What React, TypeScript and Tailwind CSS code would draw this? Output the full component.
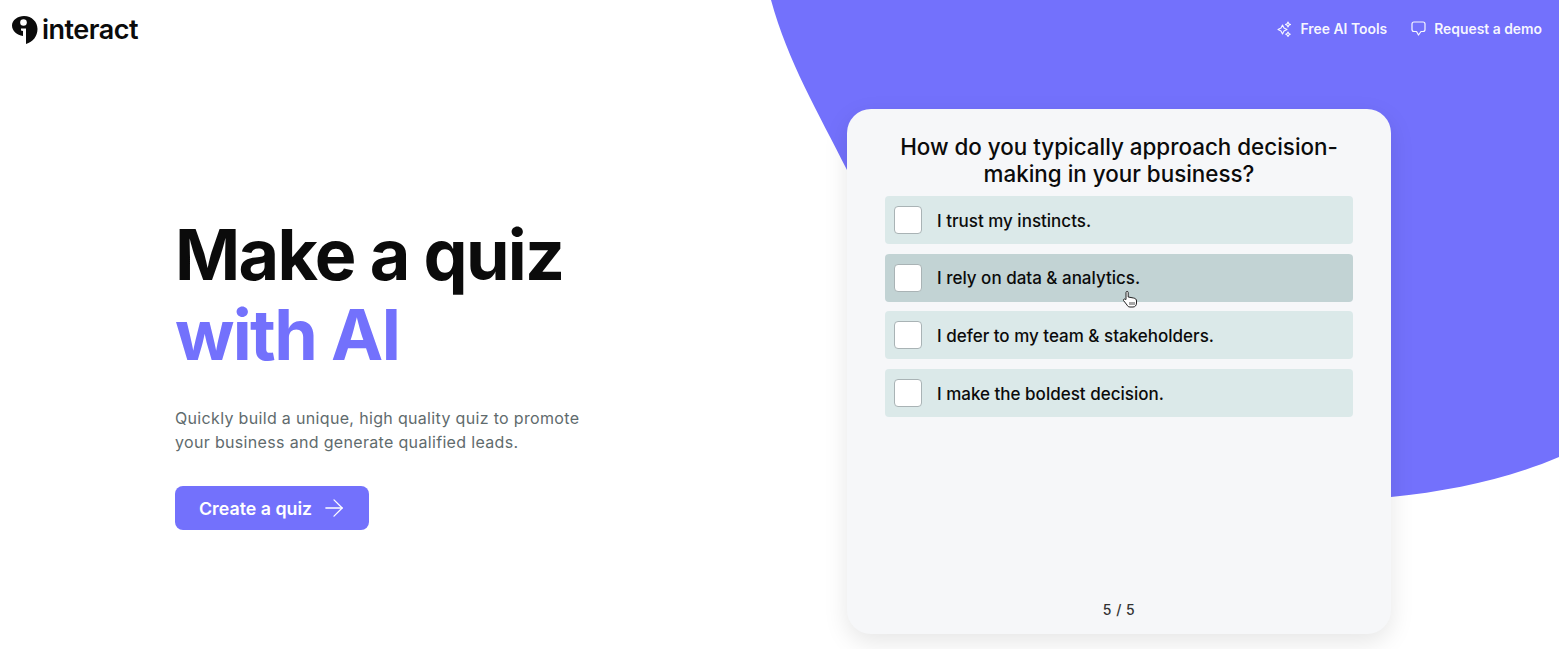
import { ArrowRight } from "lucide-react";

const options = [
  "I trust my instincts.",
  "I rely on data & analytics.",
  "I defer to my team & stakeholders.",
  "I make the boldest decision.",
];

const Logo = () => (
  <div className="flex items-center gap-[3px]">
    <svg width="27" height="28" viewBox="0 0 27 28" className="mt-px">
      <path
        d="M12 0C20 0 25.5 6 25.5 13C25.5 20 21 26 14 28L14 12.5L9 12.5L9 14.5L11 15L11 20C5 19 0 15 0 9.5C0 4 6 0 12 0Z"
        fill="#0b0b0b"
      />
      <circle cx="11.5" cy="6.5" r="3.3" fill="#fff" />
    </svg>
    <span className="text-[27px] leading-none font-semibold tracking-[-0.5px] text-[#0b0b0b]">interact</span>
  </div>
);

const SparkIcon = () => (
  <svg width="15" height="16" viewBox="0 0 15 16" fill="none" stroke="currentColor" strokeWidth="1.1" strokeLinejoin="round">
    <path d="M5.5 4L7 7L10 8.5L7 10L5.5 13L4 10L1 8.5L4 7Z" />
    <path d="M11 1L11.8 2.7L13.5 3.5L11.8 4.3L11 6L10.2 4.3L8.5 3.5L10.2 2.7Z" />
    <path d="M11 11L11.8 12.4L13.2 13.2L11.8 14L11 15.4L10.2 14L8.8 13.2L10.2 12.4Z" />
  </svg>
);

const ChatIcon = () => (
  <svg width="15" height="15" viewBox="0 0 15 15" fill="none" stroke="currentColor" strokeWidth="1.2" strokeLinejoin="round">
    <path d="M3 1H12C13.3 1 14 1.8 14 3V8.5C14 9.8 13.3 10.5 12 10.5H10L7.5 14L5.5 10.5H3C1.7 10.5 1 9.8 1 8.5V3C1 1.8 1.7 1 3 1Z" />
  </svg>
);

const App = () => {
  return (
    <div className="relative h-[649px] w-full overflow-hidden bg-white font-['Inter',sans-serif]">
      <svg className="absolute inset-0" width="1559" height="649" viewBox="0 0 1559 649">
        <path
          d="M771 0C788 62 818 112 847 170C930 340 1130 520 1391 497C1452 491 1510 478 1559 457L1559 0Z"
          fill="#7371fc"
        />
      </svg>

      <div className="relative flex h-full flex-col">
        <header className="flex h-[58px] items-center justify-between pl-3 pr-[17px]">
          <Logo />
          <nav className="flex items-center gap-6 text-[13.9px] font-semibold text-white/95">
            <a className="flex items-center gap-2">
              <SparkIcon />
              Free AI Tools
            </a>
            <a className="flex items-center gap-2">
              <ChatIcon />
              Request a demo
            </a>
          </nav>
        </header>

        <main className="flex flex-1 items-start pl-[175px]">
          <section className="w-[672px] pt-[157px]">
            <h1 className="text-[70px] leading-[80px] font-bold tracking-[-1.7px] text-[#0b0b0b]">
              Make a quiz
              <br />
              <span className="text-[#7371fc]">with AI</span>
            </h1>
            <p className="mt-[31px] text-base leading-6 tracking-[0.33px] text-[#5f6b6d]">
              Quickly build a unique, high quality quiz to promote
              <br />
              your business and generate qualified leads.
            </p>
            <button className="mt-[32px] flex h-11 w-[194px] items-center gap-2 rounded-lg bg-[#7371fc] pl-6 text-[17.8px] font-semibold text-white">
              <span className="mt-[2px]">Create a quiz</span>
              <ArrowRight size={28} strokeWidth={1.1} />
            </button>
          </section>

          <section className="mt-[51px] flex h-[525px] w-[544px] flex-col rounded-3xl bg-[#f6f7f9] px-[38px] pt-6 pb-[14px] shadow-[0_8px_24px_rgba(0,0,0,0.1)]">
            <h2 className="text-center text-[22.4px] leading-[27px] font-medium text-[#0b0b0b]">
              How do you typically approach decision-
              <br />
              making in your business?
            </h2>
            <ul className="mt-[9px] flex flex-col gap-[9.6px]">
              {options.map((o, i) => (
                <li
                  key={o}
                  className={
                    i === 1
                      ? "relative flex h-12 items-center gap-[15px] rounded bg-[#c2d3d4] px-[9px] text-[17px] font-medium text-[#0b0b0b]"
                      : "flex h-12 items-center gap-[15px] rounded bg-[#dbe9e9] px-[9px] text-[17px] font-medium text-[#0b0b0b]"
                  }
                >
                  <span className="h-7 w-7 rounded border border-[#a9b3b5] bg-white" />
                  <span className="mt-[3px]">{o}</span>
                  {i === 1 && (
                    <svg className="absolute left-[237px] top-[36px]" width="16" height="18" viewBox="0 0 16 18">
                      <path
                        d="M4 9.5V2.5C4 1 6.2 1 6.2 2.5V7L11.5 8C13.5 8.4 14.5 9.3 14.5 11V13C14.5 15.5 13 17 11 17H8C6.5 17 5.6 16.2 5 15L1.5 10.5C1 9.2 2.6 8.4 3.5 9.5Z"
                        fill="#fff"
                        stroke="#222"
                        strokeWidth="1"
                      />
                      <path d="M8 12V15M10 12V15M12 12V15" stroke="#222" strokeWidth="0.8" />
                    </svg>
                  )}
                </li>
              ))}
            </ul>
            <div className="mt-auto text-center text-sm font-medium tracking-[0.5px] text-[#333]">5 / 5</div>
          </section>
        </main>
      </div>
    </div>
  );
};

export default App;
